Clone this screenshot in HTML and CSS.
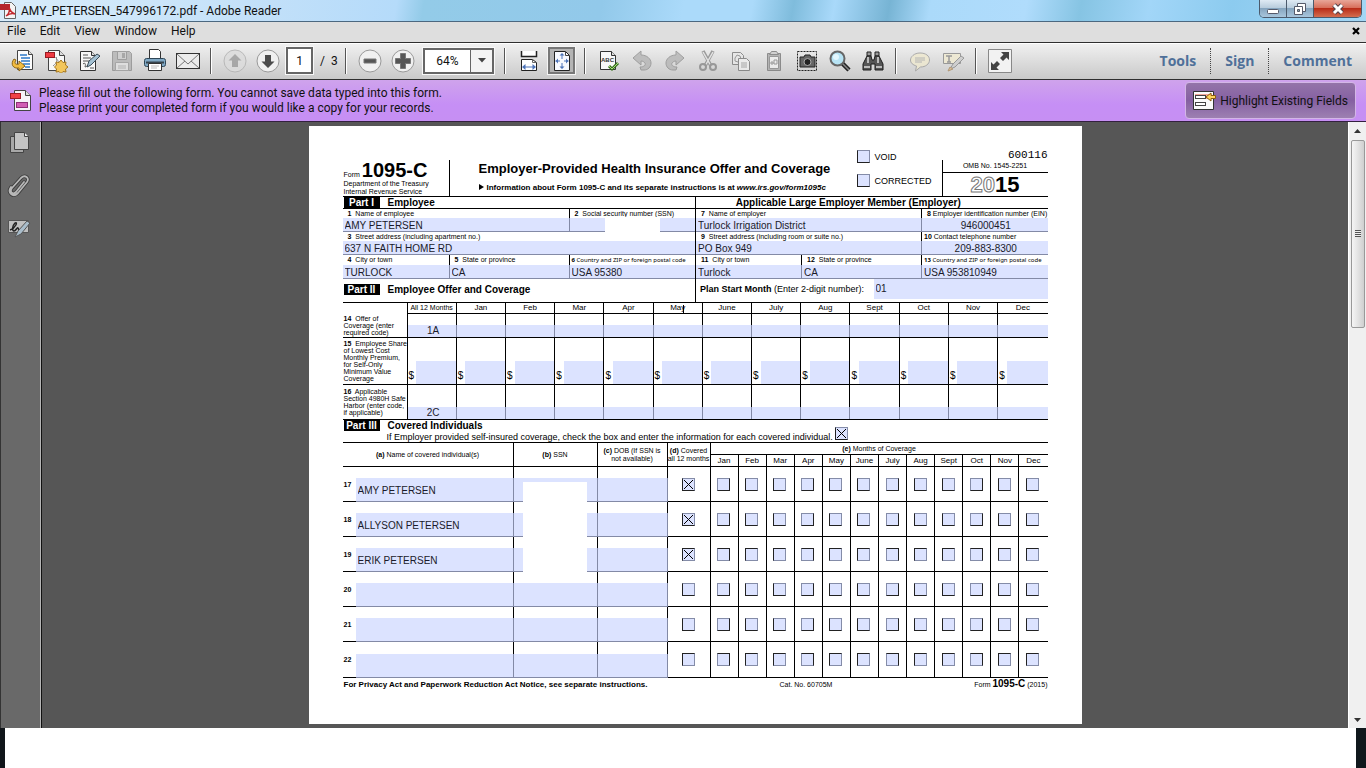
FILE: index.html
```html
<!DOCTYPE html>
<html lang="en">
<head>
<meta charset="utf-8">
<title>AMY_PETERSEN_547996172.pdf - Adobe Reader</title>
<link rel="stylesheet" href="styles.css">
</head>
<body>
<header class="titlebar">
  <svg class="app-icon" width="17" height="17" viewBox="0 0 17 17"><path d="M4.500.5h7l4 4v12h-11z" fill="#f4f4f4" stroke="#666"/><path d="M0 2h10v6H0z" fill="#b5252b"/><path d="M6 14c3-2 4-5 3-9 1 4 3 6 6 7-3-1-6 0-9 2z" fill="none" stroke="#c2272d" stroke-width="1.500"/></svg>
  <span class="title">AMY_PETERSEN_547996172.pdf - Adobe Reader</span>
  <div class="window-buttons">
    <button class="wb" aria-label="Minimize"><svg width="14" height="14" viewBox="0 0 14 14"><rect x="1.500" y="7.500" width="11" height="4" rx="1" fill="#fff" stroke="#555a6a"/></svg></button>
    <button class="wb" aria-label="Restore"><svg width="14" height="14" viewBox="0 0 14 14"><path d="M4.500 1.500h8v8h-8z" fill="#fff" stroke="#555a6a"/><path d="M1.500 4.500h8v8h-8z" fill="#fff" stroke="#555a6a"/><path d="M4.500 7.500h2v2h-2z" fill="#8aa" stroke="#555a6a"/></svg></button>
    <button class="wb wb-close" aria-label="Close"><svg width="14" height="14" viewBox="0 0 14 14"><path d="M3 3l8 8M11 3l-8 8" stroke="#54424a" stroke-width="5"/><path d="M3 3l8 8M11 3l-8 8" stroke="#fff" stroke-width="3"/></svg></button>
  </div>
</header>
<nav class="menubar">
  <button>File</button><button>Edit</button><button>View</button><button>Window</button><button>Help</button>
  <button class="doc-close" aria-label="Close document"><svg width="8" height="8" viewBox="0 0 8 8"><path d="M1 1l6 6M7 1L1 7" stroke="#000" stroke-width="2.200"/></svg></button>
</nav>
<div class="toolbar">
  <button class="tool" aria-label="Open"><svg viewBox="0 0 24 24"><path d="M6.500 1.500h11l4 4v15h-15z" fill="#fcfcfc" stroke="#444"/><path d="M17.500 1.500v4h4" fill="#ddd" stroke="#444"/><path d="M9 6h7M10 9h9M10 12h9M12 15h7M14 18h5" stroke="#2d78c8" stroke-width="1.500"/><path d="M3 10c-4 5-1 10 5 9v3l6-5-6-5v3c-4 1-5-1-3-4z" fill="#f2bd43" stroke="#8c6414"/></svg></button>
  <button class="tool" aria-label="Create PDF"><svg viewBox="0 0 24 24"><path d="M4.500 1.500h11l5 5v15h-16z" fill="#f8f8f8" stroke="#444"/><path d="M15.500 1.500v5h5" fill="#ddd" stroke="#444"/><path d="M9 17c5-4 4-6 3-9 1 4 3 5 7 6" fill="none" stroke="#888"/><rect x="1.500" y="3.500" width="9" height="5" fill="#ef3b43" stroke="#981b22"/><path d="M17 11l2 2.500 3-.500-.500 3L24 18l-2.500 2 .500 3-3-.500L17 24.500l-2-2-3 .500.500-3L10.500 18l2-2-.500-3 3 .500z" fill="#f3c65a" stroke="#a5761d"/></svg></button>
  <button class="tool" aria-label="Fill and sign"><svg viewBox="0 0 24 24"><path d="M3.500 2.500h11l4 4v15h-15z" fill="#f8f8f8" stroke="#333"/><path d="M14.500 2.500v4h4" fill="#ddd" stroke="#333"/><path d="M6 6h5M6 9h8M6 12h6M6 15c2-2 3 0 2 3 1 0 1-1 3-1M13 19h4" fill="none" stroke="#555"/><path d="M10 18l2-6 8-7 3 2-9 9z" fill="#a4c1d3" stroke="#3a4c58"/></svg></button>
  <button class="tool" disabled aria-label="Save"><svg viewBox="0 0 24 24"><path d="M2.500 2.500h17l2 2v17h-19z" fill="#b3b3b3" stroke="#8e8e8e"/><path d="M7.500 2.500h9v8h-9z" fill="#ccc" stroke="#8e8e8e"/><path d="M12 4h3v5h-3z" fill="#999"/><path d="M5.500 13.500h13v8h-13z" fill="#e0e0e0" stroke="#999"/><path d="M8 17h8M8 19h8" stroke="#aaa"/></svg></button>
  <button class="tool" aria-label="Print"><svg viewBox="0 0 24 24"><path d="M6.500.5h9l2 2v8h-11z" fill="#fff" stroke="#333"/><rect x="1.500" y="9.500" width="21" height="8" rx="2" fill="#7ea7c4" stroke="#2f4656"/><path d="M3 13.500h18" stroke="#37444e" stroke-width="2"/><path d="M5.500 14.500h13v7h-13z" fill="#fff" stroke="#333"/><path d="M8 17h8M8 19h6" stroke="#bbb"/></svg></button>
  <button class="tool" aria-label="Email"><svg viewBox="0 0 24 24"><rect x=".5" y="4.500" width="23" height="15" fill="#ececec" stroke="#333"/><path d="M1 5l11 10L23 5M1 19l8-7M23 19l-8-7" fill="none" stroke="#777"/></svg></button>
  <span class="sep"></span>
  <button class="tool" disabled aria-label="Previous page"><svg viewBox="0 0 24 24"><circle cx="12" cy="12" r="11" fill="#dcdcdc" stroke="#b0b0b0"/><path d="M12 5l6.500 6.500H15V18H9v-6.500H5.500z" fill="#9b9b9b"/></svg></button>
  <button class="tool" aria-label="Next page"><svg viewBox="0 0 24 24"><circle cx="12" cy="12" r="11" fill="#f0f0f0" stroke="#999"/><path d="M12 19l6.500-6.500H15V6H9v6.500H5.500z" fill="#4b4b4b"/></svg></button>
  <input class="page-no" value="1" aria-label="Page number"><span class="page-total">/&nbsp; 3</span>
  <span class="sep"></span>
  <button class="tool" aria-label="Zoom out"><svg viewBox="0 0 24 24"><circle cx="12" cy="12" r="11" fill="#f0f0f0" stroke="#999"/><path d="M6 10h12v4H6z" fill="#555" stroke="#777"/></svg></button>
  <button class="tool" aria-label="Zoom in"><svg viewBox="0 0 24 24"><circle cx="12" cy="12" r="11" fill="#f0f0f0" stroke="#999"/><path d="M9.500 4.500h5v5h5v5h-5v5h-5v-5h-5v-5h5z" fill="#555" stroke="#777"/></svg></button>
  <div class="zoom"><input value="64%" aria-label="Zoom level"><button aria-label="Zoom levels"><svg width="8" height="5" viewBox="0 0 8 5"><path d="M0 0h8L4 4.500z" fill="#444"/></svg></button></div>
  <span class="sep"></span>
  <button class="tool" aria-label="Fit width"><svg viewBox="0 0 24 24"><path d="M4.500 2v5.500h15V2" fill="#fff" stroke="#222" stroke-width="1.500"/><path d="M4.500 21.500v-11h11l4 3v8z" fill="#fff" stroke="#222"/><path d="M15.500 10.500v3h4" fill="none" stroke="#666"/><path d="M6 18h12" stroke="#4c73b8"/><path d="M8.500 15L5 18l3.500 3zM15.500 15l3.500 3-3.500 3z" fill="#4c73b8"/></svg></button>
  <button class="tool pressed" aria-label="Fit page"><svg viewBox="0 0 24 24"><path d="M4.500 2.500h11l4 4v15h-15z" fill="#f7f9ff" stroke="#222"/><path d="M15.500 2.500v4h4" fill="none" stroke="#444"/><path d="M12 5v5M12 14v5M5.500 12H10M14 12h4.500" stroke="#4c73b8"/><path d="M9.500 6.500L12 4l2.500 2.500zM9.500 17.500L12 20l2.500-2.500zM8 9.500L5.500 12 8 14.500zM16 9.500l2.500 2.500-2.500 2.500z" fill="#4c73b8"/></svg></button>
  <span class="sep"></span>
  <button class="tool" aria-label="Spell check"><svg viewBox="0 0 24 24"><path d="M3.500 2.500h11l4 4v14h-15z" fill="#f8f8f8" stroke="#333"/><path d="M14.500 2.500v4h4" fill="#ddd" stroke="#333"/><text x="4" y="13" class="abc">ABC</text><path d="M12 17l3 3 6-6" fill="none" stroke="#37701d" stroke-width="3"/><path d="M12 17l3 3 6-6" fill="none" stroke="#a7dc7b"/></svg></button>
  <button class="tool" disabled aria-label="Undo"><svg viewBox="0 0 24 24"><path d="M3 9l8-7v4c6 0 10 4 10 8 0 4-3 7-7 7h-3l-1-3c4 0 6-2 5-4-1-1-2-2-4-2v4z" fill="#b5b5b5" stroke="#8f8f8f"/></svg></button>
  <button class="tool" disabled aria-label="Redo"><svg viewBox="0 0 24 24"><path d="M21 9l-8-7v4C7 6 3 10 3 14c0 4 3 7 7 7h3l1-3c-4 0-6-2-5-4 1-1 2-2 4-2v4z" fill="#b5b5b5" stroke="#8f8f8f"/></svg></button>
  <button class="tool" disabled aria-label="Cut"><svg viewBox="0 0 24 24"><path d="M7 2l8 15M17 2L9 17" stroke="#888" stroke-width="3.500"/><path d="M7 3l8 14M17 3L9 17" stroke="#e4e4e4" stroke-width="1.500"/><circle cx="7" cy="18" r="3" fill="none" stroke="#888" stroke-width="2"/><circle cx="17" cy="18" r="3" fill="none" stroke="#888" stroke-width="2"/></svg></button>
  <button class="tool" disabled aria-label="Copy"><svg viewBox="0 0 24 24"><path d="M3.500 3.500h8l3 3v9h-11z" fill="#e8e8e8" stroke="#777"/><path d="M6 9l2-3 3 1 1 3-3 3-3-1z" fill="none" stroke="#888"/><path d="M9.500 9.500h8l3 3v9h-11z" fill="#efefef" stroke="#777"/><path d="M12 14h6M12 16h6M12 18h6" stroke="#999"/></svg></button>
  <button class="tool" disabled aria-label="Paste"><svg viewBox="0 0 24 24"><path d="M5.500 4.500h13v17h-13z" fill="#aaa" stroke="#777"/><path d="M7.500 7.500h9v12h-9z" fill="#f0f0f0" stroke="#888"/><path d="M7.500 5.500l2-3h5l2 3z" fill="#ccc" stroke="#777"/><path d="M9 13h2v2H9zM12 11h3v4h-3z" fill="none" stroke="#888"/></svg></button>
  <button class="tool" aria-label="Snapshot"><svg viewBox="0 0 24 24"><rect x="2.500" y="2.500" width="19" height="19" fill="none" stroke="#222" stroke-dasharray="2 1"/><path d="M5 8h4l1-2h5l1 2h4v10H5z" fill="#666" stroke="#222"/><circle cx="12.500" cy="13" r="3.500" fill="#222" stroke="#aaa"/></svg></button>
  <button class="tool" aria-label="Find"><svg viewBox="0 0 24 24"><path d="M14 14l7 7" stroke="#222" stroke-width="4.500"/><path d="M15 15l6 6" stroke="#888" stroke-width="1.500"/><circle cx="9.500" cy="9.500" r="7" fill="#b7e3f4" stroke="#666" stroke-width="2"/><circle cx="8" cy="8" r="3" fill="#e4f7fd"/></svg></button>
  <button class="tool" aria-label="Advanced search"><svg viewBox="0 0 24 24"><path d="M6 3h4v4H6zM14 3h4v4h-4z" fill="#999" stroke="#222"/><path d="M6 7h4l1 4h2l1-4h4l4 8v6h-8v-6h-4v6H2v-6z" fill="#555" stroke="#1c1c1c"/><path d="M3 18h6M15 18h6M7 8v6M17 8v6" stroke="#ddd" stroke-width="1.500"/></svg></button>
  <span class="sep"></span>
  <button class="tool" disabled aria-label="Add comment"><svg viewBox="0 0 24 24"><path d="M12 4c6 0 9.500 3 9.500 7s-4 7-9 7l-5 4 1-5C5 16 2.500 14 2.500 11S6 4 12 4z" fill="#efe9cf" stroke="#9d9d9d"/><path d="M7 9h10M7 11h10M7 13h7" stroke="#aaa"/></svg></button>
  <button class="tool" disabled aria-label="Highlight text"><svg viewBox="0 0 24 24"><path d="M2.500 4.500h17v10h-17z" fill="#f0ead0" stroke="#888"/><path d="M5 7h6M8 7v6M6 13h4" stroke="#888" stroke-width="1.500"/><path d="M9 20l3-5 8-8 3 2-9 9z" fill="#ccc" stroke="#888"/><path d="M7 22l2-4 3 2z" fill="#e0ba88" stroke="#aa8a60"/></svg></button>
  <span class="sep"></span>
  <button class="tool" aria-label="Read mode"><svg viewBox="0 0 24 24"><path d="M.5.5h23v23H.5z" fill="#f2f2f2" stroke="#888"/><path d="M13 3h8v8l-2.500-2.500L15 12l-3-3 3.500-3.500zM3 21v-8l2.500 2.500L9 12l3 3-3.500 3.500L11 21z" fill="#444"/></svg></button>
  <div class="panels"><button>Tools</button><button>Sign</button><button>Comment</button></div>
</div>
<div class="notice">
  <svg width="24" height="24" viewBox="0 0 24 24"><path d="M5.500 1.500h11l5 5v15h-16z" fill="#f6f3f8" stroke="#444"/><path d="M16.500 1.500v5h5" fill="#ddd" stroke="#444"/><rect x="1.500" y="4.500" width="10" height="5" fill="#f04148" stroke="#a21c26"/><rect x="7.500" y="13.500" width="11" height="5" fill="#d15db4" stroke="#8e2f78"/></svg>
  <p>Please fill out the following form. You cannot save data typed into this form.<br>Please print your completed form if you would like a copy for your records.</p>
  <button class="highlight"><svg width="23" height="20" viewBox="0 0 23 20"><path d="M.5.5h20v18H.5z" fill="#fafafa" stroke="#333"/><path d="M2 3h17v5H2z" fill="#f3a79c"/><rect x="2.500" y="4.500" width="10" height="3" fill="#fff" stroke="#444"/><rect x="2.500" y="11.500" width="10" height="3" fill="#fff" stroke="#444"/><path d="M13 6l5-4v2.500h4.500v3H18V10z" fill="#ffd55c" stroke="#8c5c10"/></svg>Highlight Existing Fields</button>
</div>
<div class="viewer">
  <aside class="rail">
    <button aria-label="Pages"><svg viewBox="0 0 24 24"><path d="M3.500 5.500h13v16h-13z" fill="#a8a8a8" stroke="#444"/><path d="M7.500 1.500h10l4 4v13h-14z" fill="#c4c4c4" stroke="#444"/><path d="M17.500 1.500v4h4" fill="#eee" stroke="#444"/></svg></button>
    <button aria-label="Attachments"><svg viewBox="0 0 24 24"><g fill="none" stroke-linecap="round"><path d="M17 8l-8 10c-3 3-7 0-4-4L14 4c4-4 9 0 6 4l-9 11c-5 5-11 0-7-6" stroke="#3c3c3c" stroke-width="3.500"/><path d="M17 8l-8 10c-3 3-7 0-4-4L14 4c4-4 9 0 6 4l-9 11c-5 5-11 0-7-6" stroke="#b8b8b8" stroke-width="1.800"/></g></svg></button>
    <button aria-label="Signatures"><svg viewBox="0 0 24 24"><path d="M1.500 3.500h20v12h-20z" fill="#c0c0c0" stroke="#555"/><path d="M3 13c6-2 8-9 5-7-3 3-3 8-1 8s3-4 4-3 0 3 3 2" fill="none" stroke="#222" stroke-width="1.500"/><path d="M8 20l3-6 9-10 3 2-9 11z" fill="#a9bdcb" stroke="#555"/></svg></button>
  </aside>
  <main class="canvas">
    <article class="paper">
      <header class="form-head">
        <div class="form-id"><div>Form <b>1095-C</b></div><p>Department of the Treasury<br>Internal Revenue Service</p></div>
        <div class="form-title"><h1>Employer-Provided Health Insurance Offer and Coverage</h1><p><i class="tri"></i>Information about Form 1095-C and its separate instructions is at <em>www.irs.gov/form1095c</em></p></div>
        <div class="form-flags"><label><input type="checkbox">VOID</label><label><input type="checkbox">CORRECTED</label></div>
        <div class="form-year"><code>600116</code><p>OMB No. 1545-2251</p><strong><span>20</span>15</strong></div>
      </header>
      <div class="halves">
        <section class="half">
          <h2 class="bar"><span class="tag">Part I</span>Employee</h2>
          <div class="row two">
            <label class="cell"><span><b>1</b> Name of employee</span><input value="AMY PETERSEN"></label>
            <label class="cell last"><span><b>2</b> Social security number (SSN)</span><input><i class="cover"></i></label>
          </div>
          <div class="row"><label class="cell last"><span><b>3</b> Street address (including apartment no.)</span><input value="637 N FAITH HOME RD"></label></div>
          <div class="row three">
            <label class="cell"><span><b>4</b> City or town</span><input value="TURLOCK"></label>
            <label class="cell"><span><b>5</b> State or province</span><input value="CA"></label>
            <label class="cell last"><span class="tight"><b>6</b> Country and ZIP or foreign postal code</span><input value="USA 95380"></label>
          </div>
          <h2 class="part2"><span class="tag">Part II</span>Employee Offer and Coverage</h2>
        </section>
        <section class="half right">
          <h2 class="bar center">Applicable Large Employer Member (Employer)</h2>
          <div class="row two">
            <label class="cell"><span><b>7</b> Name of employer</span><input value="Turlock Irrigation District"></label>
            <label class="cell last"><span class="ein"><b>8</b> Employer identification number (EIN)</span><input class="mid" value="946000451"></label>
          </div>
          <div class="row two">
            <label class="cell"><span><b>9</b> Street address (including room or suite no.)</span><input value="PO Box 949"></label>
            <label class="cell last"><span class="phone"><b>10</b> Contact telephone number</span><input class="mid" value="209-883-8300"></label>
          </div>
          <div class="row three">
            <label class="cell"><span><b>11</b> City or town</span><input value="Turlock"></label>
            <label class="cell"><span><b>12</b> State or province</span><input value="CA"></label>
            <label class="cell last"><span class="tight"><b>13</b> Country and ZIP or foreign postal code</span><input value="USA 953810949"></label>
          </div>
          <label class="plan"><span><b>Plan Start Month</b> (Enter 2-digit number):</span><input value="01"></label>
        </section>
      </div>
      <table class="offer">
        <colgroup><col class="c-lines"></colgroup>
        <thead><tr id="offer-head"><th></th><th class="all">All 12 Months</th></tr></thead>
        <tbody>
          <tr class="r14" data-kind="code" data-value="1A"><th><b>14</b>&nbsp; Offer of<br>Coverage (enter<br>required code)</th></tr>
          <tr class="r15" data-kind="money"><th><b>15</b>&nbsp; Employee Share<br>of Lowest Cost<br>Monthly Premium,<br>for Self-Only<br>Minimum Value<br>Coverage</th></tr>
          <tr class="r16" data-kind="code" data-value="2C"><th><b>16</b>&nbsp; Applicable<br>Section 4980H Safe<br>Harbor (enter code,<br>if applicable)</th></tr>
        </tbody>
      </table>
      <section class="part3">
        <h2><span class="tag">Part III</span>Covered Individuals</h2>
        <label>If Employer provided self-insured coverage, check the box and enter the information for each covered individual.<input type="checkbox" checked></label>
      </section>
      <table class="covered">
        <colgroup><col class="c-num"><col class="c-name"><col class="c-ssn"><col class="c-dob"><col class="c-all"></colgroup>
        <thead>
          <tr><th colspan="2" rowspan="2"><b>(a)</b> Name of covered individual(s)</th><th rowspan="2"><b>(b)</b> SSN</th><th rowspan="2"><b>(c)</b> DOB (If SSN is<br>not available)</th><th rowspan="2"><b>(d)</b> Covered<br>all 12 months</th><th colspan="12" class="months"><b>(e)</b> Months of Coverage</th></tr>
          <tr id="covered-head"></tr>
        </thead>
        <tbody id="covered-body"></tbody>
      </table>
      <footer class="form-foot"><b>For Privacy Act and Paperwork Reduction Act Notice, see separate instructions.</b><span>Cat. No. 60705M</span><span class="end">Form <b>1095-C</b> (2015)</span></footer>
    </article>
  </main>
  <div class="scroll"><button aria-label="Scroll up"><svg width="7" height="4" viewBox="0 0 7 4"><path d="M0 4h7L3.500 0z" fill="#333"/></svg></button><div class="thumb"></div><button class="down" aria-label="Scroll down"><svg width="7" height="4" viewBox="0 0 7 4"><path d="M0 0h7L3.500 4z" fill="#333"/></svg></button></div>
</div>
<div class="desktop"></div>
<script src="form.js"></script>
</body>
</html>
```
FILE: form.js
```js
const months = ["Jan", "Feb", "Mar", "Apr", "May", "June", "July", "Aug", "Sept", "Oct", "Nov", "Dec"];

const offerHead = document.getElementById("offer-head");
months.forEach(m => offerHead.insertAdjacentHTML("beforeend", `<th>${m}${m === "May" ? '<i class="pointer"></i>' : ""}</th>`));

document.querySelectorAll(".offer tbody tr").forEach(tr => {
  const money = tr.dataset.kind === "money";
  ["All 12 Months", ...months].forEach((m, i) => {
    const value = i === 0 && tr.dataset.value ? tr.dataset.value : "";
    const field = `<input value="${value}" aria-label="${m}">`;
    tr.insertAdjacentHTML("beforeend", money ? `<td><div class="money">$${field}</div></td>` : `<td>${field}</td>`);
  });
});

const coveredHead = document.getElementById("covered-head");
months.forEach(m => coveredHead.insertAdjacentHTML("beforeend", `<th class="month">${m}</th>`));

const people = [[17, "AMY PETERSEN"], [18, "ALLYSON PETERSEN"], [19, "ERIK PETERSEN"], [20, ""], [21, ""], [22, ""]];
const body = document.getElementById("covered-body");
people.forEach(([line, name], i) => {
  const boxes = months.map(m => `<td class="tick"><input type="checkbox" aria-label="${m}, line ${line}"></td>`).join("");
  body.insertAdjacentHTML("beforeend", `<tr>
    <th>${line}</th>
    <td><input value="${name}" aria-label="Name, line ${line}"></td>
    <td class="ssn"><input aria-label="SSN, line ${line}">${i === 0 ? '<i class="cover"></i>' : ""}</td>
    <td><input aria-label="DOB, line ${line}"></td>
    <td class="tick"><input type="checkbox" ${name ? "checked" : ""} aria-label="All 12 months, line ${line}"></td>${boxes}</tr>`);
});
```
FILE: styles.css
```css
* { box-sizing: border-box; }
body { margin: 0; min-height: 100vh; display: flex; flex-direction: column; font: 12px/16px Roboto, "Open Sans", sans-serif; color: #111; background: #fff; }
button { font: inherit; color: inherit; border: 0; background: none; padding: 0; display: flex; align-items: center; justify-content: center; }
input { font: inherit; color: inherit; border: 0; border-radius: 0; padding: 0; margin: 0; min-width: 0; }
h1, h2, p { margin: 0; }

.titlebar { height: 22px; flex: none; display: flex; align-items: center; gap: 4px; border-bottom: 1px solid #4c6880;
  background: linear-gradient(100deg, #d9ecfa 0, #c4e1f9 18%, #b5dbfa 29%, #93cbe8 31%, #92c9ea 44%, #abdafa 50%, #abdafa 55%, #7fbcdc 58%, #a9d9fa 61%, #77b4d4 65%, #abdafa 68%, #b0dcfc 75%, #86c4e3 79%, #a2d6f8 84%, #8ccbef 90%, #a4d7f5 100%); }
.title { padding-top: 1px; }
.window-buttons { margin-left: auto; margin-right: 4px; align-self: flex-start; display: flex; height: 18px; border: 1px solid #4b5a6c; border-top: 0; border-radius: 0 0 5px 5px; overflow: hidden; }
.wb { width: 27px; border-right: 1px solid #4b5a6c; background: linear-gradient(#dfeaf4, #b9cddd 45%, #86a5bf 50%, #a9c6dc); }
.wb-close { width: 47px; border: 0; background: linear-gradient(#e8a698, #d8705c 45%, #b92d18 50%, #d46d4f); }

.menubar { height: 21px; flex: none; display: flex; align-items: center; gap: 14px; padding: 0 6px 2px 7px; background: #dedede; border-bottom: 1px solid #2f2f2f; }
.doc-close { margin-left: auto; }

.toolbar { height: 37px; flex: none; display: flex; align-items: center; padding: 0 0 2px 6px; background: linear-gradient(#f0f0f0, #c9c9c9); border-top: 1px solid #fff; border-bottom: 1px solid #2f2f2f; }
.tool { width: 33px; height: 28px; flex: none; }
.tool svg { width: 24px; height: 24px; flex: none; }
.tool:disabled { opacity: .8; }
.pressed { width: 27px; height: 27px; margin: 0 3px; background: #b4b4b4; border: 2px solid #777; outline: 1px solid #f4f4f4; }
.abc { font: bold 6px "Liberation Sans", sans-serif; fill: #333; }
.sep { width: 14px; height: 26px; flex: none; background: linear-gradient(90deg, #555 0 1px, #fff 1px 2px) 6px 0 / 2px 100% no-repeat; }
.page-no { width: 27px; height: 27px; margin-left: 2px; border: 2px solid #666; outline: 1px solid #f8f8f8; text-align: center; background: #fff; }
.page-total { width: 26px; padding-left: 7px; white-space: nowrap; }
.zoom { display: flex; width: 71px; height: 26px; margin: 0 4px; border: 2px solid #666; outline: 1px solid #f8f8f8; background: #fff; }
.zoom input { flex: 1; text-align: center; background: #fff; }
.zoom button { width: 22px; border-left: 1px solid #666; background: #f4f4f4; }
.panels { margin-left: auto; display: flex; font: bold 14px/26px "Open Sans", "Noto Sans", sans-serif; color: #4f7099; text-shadow: 0 1px #fff; }
.panels button { padding: 0 14px; }
.panels button + button { border-left: 1px dotted #444; }

.notice { min-height: 42px; flex: none; display: flex; align-items: center; gap: 6px; padding: 0 10px 0 9px; background: linear-gradient(#cfa3ec, #c68ff5 60%, #c68ff3); border-bottom: 1px solid #33203f; }
.notice p { line-height: 15px; padding-top: 1px; }
.highlight { margin-left: auto; height: 37px; gap: 4px; padding: 0 7px; white-space: nowrap; border: 1px solid #d3b6e6; border-radius: 4px; background: linear-gradient(#9474a9, #8560a2 50%, #9d80b1); }

.viewer { flex: 1; display: flex; background: #565656; }
.rail { width: 42px; flex: none; display: flex; flex-direction: column; align-items: center; gap: 19px; padding: 9px 4px 0 0; background: #696969; border-left: 1px solid #333; border-right: 1px solid #111; box-shadow: inset -1px 0 #b5b5b5; }
.rail svg { width: 24px; height: 24px; display: block; }
.canvas { flex: 1; min-width: 0; padding: 4px 0; }
.scroll { width: 18px; flex: none; display: flex; flex-direction: column; background: #f0f0f0; border-left: 1px solid #fff; }
.scroll button { height: 17px; }
.scroll .down { margin-top: auto; }
.thumb { height: 31%; margin: 1px 1px 0 2px; border: 1px solid #999; border-radius: 2px; background: repeating-linear-gradient(#555 0 1px, #eee 1px 2px) center / 6px 7px no-repeat, linear-gradient(90deg, #f5f5f5, #e3e3e3 50%, #cfcfcf); }
.desktop { height: 40px; flex: none; background: #fff; border-left: 5px solid #10151a; border-right: 10px solid #10181c; }

.paper { max-width: 773px; margin: 0 auto; padding: 24px 34px 33px; background: #fff; color: #000; font: 7px/8px "Liberation Sans", Arial, sans-serif; }
.paper h2 { font-size: 10px; line-height: 11px; }
.paper input:not([type="checkbox"]) { display: block; width: calc(100% + 1px); padding-left: 2px; font-size: 10px; line-height: 12px; color: #1a1a2a; background: rgba(201, 212, 255, .65); }
.paper input[type="checkbox"] { appearance: none; width: 13px; height: 13px; flex: none; border: 1px solid #222; border-top-color: #848ca8; border-right-color: #848ca8; background: #dce3ff; }
.paper input:checked { background: linear-gradient(45deg, transparent 46%, #000 46% 54%, transparent 54%) center / 9px 9px no-repeat, linear-gradient(-45deg, transparent 46%, #000 46% 54%, transparent 54%) center / 9px 9px no-repeat, #dce3ff; }
.tag { display: inline-block; width: 36px; margin: 0 8px 0 1px; background: #000; color: #fff; text-align: center; }
.cover { position: absolute; background: #fff; }

.form-head { display: grid; grid-template-columns: 107px 1fr 85px 106px; border-bottom: 1px solid #000; }
.form-id { margin-top: 10px; border-right: 1px solid #000; padding-left: 1px; }
.form-id b { font-size: 20px; line-height: 20px; }
.form-id p { line-height: 8px; white-space: nowrap; }
.form-title { padding: 11px 0 0 29px; white-space: nowrap; }
.form-title h1 { font-size: 13px; line-height: 15px; }
.form-title p { margin-top: 7px; font-size: 8px; line-height: 9px; font-weight: bold; }
.tri { display: inline-block; margin-right: 3px; border: 3px solid transparent; border-left: 5px solid #000; border-right: 0; }
.form-flags { display: flex; flex-direction: column; gap: 11px; font-size: 9px; }
.form-flags label { display: flex; align-items: center; gap: 5px; }
.form-year { display: flex; flex-direction: column; text-align: center; }
.form-year code { font: 11px/10px "Liberation Mono", monospace; text-align: right; }
.form-year p { border-left: 1px solid #000; border-bottom: 1px solid #000; line-height: 12px; }
.form-year strong { border-left: 1px solid #000; font-size: 22px; line-height: 23px; }
.form-year span { color: #fff; -webkit-text-stroke: 1px #777; }

.halves { display: grid; grid-template-columns: 1fr 1fr; border-bottom: 1px solid #000; }
.half.right { border-left: 1px solid #000; }
.bar { border-bottom: 1px solid #000; }
.bar.center { padding-right: 47px; text-align: center; }
.row { display: grid; border-bottom: 1px solid #000; }
.row.two { grid-template-columns: 227px 1fr; }
.row.three { grid-template-columns: 107px 120px 1fr; }
.cell { position: relative; border-right: 1px solid #000; min-width: 0; }
.cell.last { border-right: 0; }
.cell span { display: block; padding-left: 5px; line-height: 9px; white-space: nowrap; }
.row.three span { line-height: 10px; }
.cell b { margin-right: 2px; }
.cell .tight { padding-left: 2px; font-family: "Noto Sans", sans-serif; font-size: 6px; }
.cell .phone { padding-left: 2px; }
.cell .tight b, .cell .ein b, .cell .phone b { margin-right: 0; }
.cell input { height: 14px; margin-bottom: -1px; }
.cell.last input { width: 100% !important; }
.right .row.two { grid-template-columns: 226px 1fr; }
.right .row.three { grid-template-columns: 106px 120px 1fr; }
.paper .mid { text-align: center; }
.cell .cover { left: 35px; top: 8px; width: 55px; height: 16px; }
.part2 { padding: 5px 0 7px; }
.plan { display: flex; justify-content: space-between; align-items: stretch; padding-left: 4px; font-size: 9px; line-height: 20px; white-space: nowrap; }
.plan input { max-width: 174px; }

table { width: 100%; table-layout: fixed; border-spacing: 0; }
th, td { padding: 0; font-weight: normal; border-bottom: 1px solid #000; border-right: 1px solid #000; }
tr > :last-child { border-right: 0; }
.c-lines { width: 65px; }
.offer thead th { position: relative; font-size: 8px; line-height: 10px; }
.pointer { position: absolute; left: 29px; top: 2px; width: 1px; height: 9px; background: #000; }
.offer thead th:first-child { border-bottom: 0; }
.offer thead .all { font-size: 7px; }
.offer tbody th { text-align: left; padding-left: 1px; line-height: 7px; white-space: nowrap; }
.offer td { vertical-align: bottom; }
.offer input { height: 12px; text-align: center; }
.offer td:last-child input { width: 100% !important; }
.r14 th { height: 24px; }
.r15 th { height: 47px; }
.r16 th { height: 35px; }
.money { display: flex; align-items: flex-end; gap: 2px; padding-left: 1px; font-size: 10px; line-height: 17px; }
.money input { flex: 1; height: 23px; }

.part3 { border-bottom: 1px solid #000; }
.part3 label { display: flex; align-items: flex-end; gap: 2px; margin: -4px 0 0 44px; font-size: 9px; line-height: 10px; }
.part3 input { margin-bottom: 2px; }

.c-num { width: 13px; }
.c-name { width: 158px; }
.c-ssn { width: 84px; }
.c-dob { width: 70px; }
.c-all { width: 43px; }
.covered thead th { white-space: nowrap; }
.covered thead .month { font-size: 8px; line-height: 11px; border-right: 1px solid #000; }
.covered thead .month:last-child, .covered .months { border-right: 0; }
.covered .months { line-height: 11px; }
.covered tbody th { border-right: 0; font-weight: bold; vertical-align: top; padding-top: 14px; text-align: left; padding-left: 1px; }
.covered td { height: 35px; vertical-align: bottom; }
.covered tr:last-child td { height: 36px; }
.covered .ssn { position: relative; }
.covered td > input:not([type="checkbox"]) { height: 24px; margin-bottom: -1px; }
.ssn .cover { z-index: 1; left: 9px; top: 15px; width: 64px; height: 94px; }
.covered .tick { vertical-align: middle; text-align: center; padding-right: 1px; }
.covered .tick input { display: block; margin: 0 auto; }
.covered tr:nth-child(3n) .tick input { border-top-color: #222; border-bottom-color: #848ca8; }
.covered .tick:nth-child(3n) input { border-left-color: #848ca8; border-right-color: #222; }
.form-foot { display: grid; grid-template-columns: 436px 1fr auto; align-items: center; padding: 0 0 0 1px; font-size: 7px; line-height: 12px; }
.form-foot > b { font-size: 8px; }
.form-foot .end b { font-size: 10px; }
```
